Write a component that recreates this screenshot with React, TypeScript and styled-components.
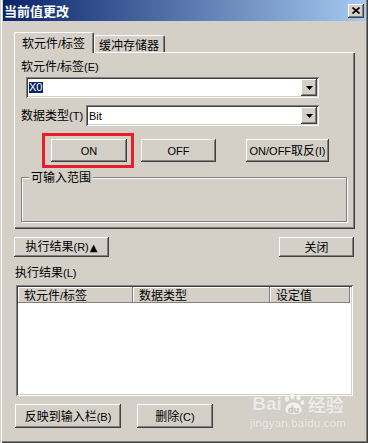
import React from "react";
import styled, { createGlobalStyle, css } from "styled-components";

const Global = createGlobalStyle`
  html, body { margin: 0; padding: 0; background: #d4d0c8; }
  body {
    font-family: "Liberation Sans", "Noto Sans CJK SC", sans-serif;
    font-size: 11px;
    line-height: 14px;
    color: #000;
  }
  * { box-sizing: border-box; }
`;

const raised = css`
  background: #d4d0c8;
  box-shadow: inset -1px -1px #404040, inset 1px 1px #ffffff,
    inset -2px -2px #808080, inset 2px 2px #d4d0c8;
`;

const sunken = css`
  box-shadow: inset 1px 1px #808080, inset -1px -1px #ffffff,
    inset 2px 2px #404040, inset -2px -2px #d4d0c8;
`;

const Cjk = styled.span`
  font-family: "Noto Sans CJK SC", sans-serif;
  font-size: 12px;
`;

const CJK_RE = /([\u2e80-\u9fff\uff00-\uffef]+)/;
function T({ s }: { s: string }) {
  return (
    <>
      {s.split(CJK_RE).map((p, i) =>
        CJK_RE.test(p) ? <Cjk key={i}>{p}</Cjk> : <React.Fragment key={i}>{p}</React.Fragment>
      )}
    </>
  );
}

const Window = styled.div`
  position: relative;
  width: 368px;
  height: 443px;
  display: flex;
  flex-direction: column;
  background: #d4d0c8;
  box-shadow: inset 1px 0 #d4d0c8, inset 2px 0 #ffffff, inset -1px -1px #404040,
    inset -2px -2px #808080;
  overflow: hidden;
`;

const TitleBar = styled.div`
  height: 21px;
  margin: 0 2px 0 3px;
  display: flex;
  align-items: center;
  justify-content: space-between;
  padding: 0 2px 0 1px;
  background: linear-gradient(to right, #0a246a, #a6caf0);
`;

const TitleText = styled.span`
  color: #fff;
  font-family: "Noto Sans CJK SC", sans-serif;
  font-weight: bold;
  font-size: 13px;
  line-height: 16px;
`;

const CloseBtn = styled.div`
  ${raised};
  width: 16px;
  height: 14px;
  display: flex;
  align-items: center;
  justify-content: center;
`;

const Content = styled.div`
  display: flex;
  flex-direction: column;
  padding: 11px 13px 0 14px;
`;

const TabStrip = styled.div`
  display: flex;
  align-items: flex-end;
  height: 20px;
`;

const Tab = styled.div<{ $active?: boolean; $w: number }>`
  position: relative;
  width: ${(p) => p.$w}px;
  height: ${(p) => (p.$active ? 21 : 17)}px;
  margin-bottom: ${(p) => (p.$active ? -1 : 0)}px;
  z-index: ${(p) => (p.$active ? 1 : 0)};
  background: #d4d0c8;
  border-top: 1px solid #fff;
  border-left: 1px solid #fff;
  border-right: 1px solid #404040;
  border-radius: 2px 2px 0 0;
  box-shadow: inset -1px 0 #808080;
  padding: ${(p) => (p.$active ? "3px 0 0 7px" : "2px 0 0 4px")};
  white-space: nowrap;
`;

const Panel = styled.div`
  height: 177px;
  display: flex;
  flex-direction: column;
  padding: 7px 0 0 7px;
  box-shadow: inset 1px 1px #ffffff, inset -1px -1px #404040, inset -2px -2px #808080;
`;

const FieldLabel = styled.div`
  height: 14px;
  white-space: nowrap;
`;

const Combo = styled.div<{ $w: number }>`
  ${sunken};
  width: ${(p) => p.$w}px;
  height: 21px;
  padding: 2px;
  display: flex;
  align-items: center;
  background: #fff;
`;

const DeviceCombo = styled(Combo)`
  margin: 4px 0 0 5px;
`;

const ComboText = styled.div`
  flex: 1;
  padding-left: 1px;
  display: flex;
  align-items: center;
`;

const Selected = styled.span`
  background: #0a246a;
  color: #fff;
  line-height: 11px;
  padding: 0 1px 0 0;
`;

const DropBtn = styled.div`
  ${raised};
  width: 16px;
  height: 17px;
  display: flex;
  align-items: center;
  justify-content: center;
`;

const TypeRow = styled.div`
  display: flex;
  align-items: center;
  margin-top: 7px;
`;

const TypeLabel = styled.div`
  width: 65px;
  white-space: nowrap;
`;

const ButtonRow = styled.div`
  display: flex;
  margin-top: 13px;
`;

const Btn = styled.div<{ $w: number; $h: number; $ml?: number }>`
  ${raised};
  position: relative;
  width: ${(p) => p.$w}px;
  height: ${(p) => p.$h}px;
  margin-left: ${(p) => p.$ml ?? 0}px;
  display: flex;
  align-items: center;
  justify-content: center;
  white-space: nowrap;
  flex-shrink: 0;
`;

const Highlight = styled.div`
  position: absolute;
  left: -9px;
  top: -6px;
  right: -7px;
  bottom: -6px;
  border: 3px solid #e61e28;
  pointer-events: none;
`;

const GroupBox = styled.div`
  position: relative;
  margin-top: 15px;
  width: 326px;
  height: 45px;
  border: 1px solid #808080;
  box-shadow: inset 1px 1px #ffffff, 1px 1px #ffffff;
`;

const Legend = styled.span`
  position: absolute;
  top: -8px;
  left: 7px;
  padding: 0 2px;
  background: #d4d0c8;
`;

const ActionRow = styled.div`
  display: flex;
  justify-content: space-between;
  margin-top: 8px;
  padding-right: 1px;
`;

const Arrow = styled.span`
  font-family: "DejaVu Sans", sans-serif;
  font-size: 10px;
  margin-left: 1px;
`;

const SectionLabel = styled.div`
  margin-top: 8px;
  padding-left: 1px;
  height: 14px;
`;

const ListView = styled.div`
  ${sunken};
  margin: 6px 0 0 2px;
  width: 337px;
  height: 111px;
  padding: 2px;
  background: #fff;
`;

const Header = styled.div`
  display: flex;
  height: 16px;
`;

const HeaderCell = styled.div<{ $w: number }>`
  width: ${(p) => p.$w}px;
  height: 16px;
  padding-left: 6px;
  background: #d4d0c8;
  box-shadow: inset -1px -1px #808080, inset 1px 1px #ffffff;
  line-height: 15px;
  overflow: hidden;
  white-space: nowrap;
`;

const BottomRow = styled.div`
  display: flex;
  margin-top: 8px;
`;

const Watermark = styled.div`
  position: absolute;
  left: 250px;
  top: 392px;
  display: flex;
  flex-direction: column;
  align-items: center;
  color: rgba(255, 255, 255, 0.7);
  text-shadow: 0 0 1px rgba(170, 170, 170, 0.45);
  pointer-events: none;
`;

const WmTop = styled.div`
  display: flex;
  align-items: center;
  font-family: "Liberation Sans", sans-serif;
  font-weight: bold;
  font-size: 19px;
  line-height: 24px;
`;

const WmCjk = styled.span`
  font-family: "Noto Sans CJK SC", sans-serif;
  font-size: 18px;
  font-weight: bold;
  margin-left: 2px;
`;

const WmSub = styled.div`
  font-family: "Liberation Sans", sans-serif;
  font-size: 11.5px;
  line-height: 14px;
  letter-spacing: 0.2px;
`;

const DownTri = () => (
  <svg width="7" height="4" viewBox="0 0 7 4">
    <path d="M0 0h7L3.5 4z" fill="#000" />
  </svg>
);

const XIcon = () => (
  <svg width="8" height="7" viewBox="0 0 8 7">
    <path d="M0.5 0.5L7.5 6.5M7.5 0.5L0.5 6.5" stroke="#000" strokeWidth="1.6" />
  </svg>
);

const Paw = () => (
  <svg width="24" height="22" viewBox="0 0 24 22">
    <g fill="rgba(255,255,255,0.7)" stroke="rgba(170,170,170,0.45)" strokeWidth="0.6">
      <ellipse cx="5" cy="6" rx="2.6" ry="3.2" />
      <ellipse cx="10.5" cy="3.5" rx="2.6" ry="3.2" />
      <ellipse cx="16.5" cy="4.5" rx="2.6" ry="3.2" />
      <ellipse cx="20.5" cy="9.5" rx="2.3" ry="2.8" />
      <path d="M3 17c0-5 4.5-8 8.5-8s8.5 3 8.5 8c0 3-3.5 4.5-8.5 4.5S3 20 3 17z" />
    </g>
    <text
      x="11.5"
      y="19.5"
      textAnchor="middle"
      fontFamily="Liberation Sans, sans-serif"
      fontWeight="bold"
      fontSize="9"
      fill="rgba(190,186,178,0.9)"
      stroke="none"
    >
      du
    </text>
  </svg>
);

export default function App() {
  return (
    <>
      <Global />
      <Window>
        <TitleBar>
          <TitleText>当前值更改</TitleText>
          <CloseBtn>
            <XIcon />
          </CloseBtn>
        </TitleBar>
        <Content>
          <TabStrip>
            <Tab $active $w={80}>
              <T s="软元件/标签" />
            </Tab>
            <Tab $w={71}>
              <T s="缓冲存储器" />
            </Tab>
          </TabStrip>
          <Panel>
            <FieldLabel>
              <T s="软元件/标签(E)" />
            </FieldLabel>
            <DeviceCombo $w={293}>
              <ComboText>
                <Selected>X0</Selected>
              </ComboText>
              <DropBtn>
                <DownTri />
              </DropBtn>
            </DeviceCombo>
            <TypeRow>
              <TypeLabel>
                <T s="数据类型(T)" />
              </TypeLabel>
              <Combo $w={233}>
                <ComboText>Bit</ComboText>
                <DropBtn>
                  <DownTri />
                </DropBtn>
              </Combo>
            </TypeRow>
            <ButtonRow>
              <Btn $w={76} $h={23} $ml={30}>
                ON
                <Highlight />
              </Btn>
              <Btn $w={75} $h={23} $ml={14}>
                OFF
              </Btn>
              <Btn $w={83} $h={23} $ml={30}>
                <span>
                  <T s="ON/OFF取反(I)" />
                </span>
              </Btn>
            </ButtonRow>
            <GroupBox>
              <Legend>
                <T s="可输入范围" />
              </Legend>
            </GroupBox>
          </Panel>
          <ActionRow>
            <Btn $w={95} $h={20}>
              <span>
                <T s="执行结果(R)" />
                <Arrow>▲</Arrow>
              </span>
            </Btn>
            <Btn $w={75} $h={20}>
              <T s="关闭" />
            </Btn>
          </ActionRow>
          <SectionLabel>
            <T s="执行结果(L)" />
          </SectionLabel>
          <ListView>
            <Header>
              <HeaderCell $w={115}>
                <T s="软元件/标签" />
              </HeaderCell>
              <HeaderCell $w={137}>
                <T s="数据类型" />
              </HeaderCell>
              <HeaderCell $w={80}>
                <T s="设定值" />
              </HeaderCell>
            </Header>
          </ListView>
          <BottomRow>
            <Btn $w={106} $h={24} $ml={1}>
              <span>
                <T s="反映到输入栏(B)" />
              </span>
            </Btn>
            <Btn $w={76} $h={24} $ml={16}>
              <span>
                <T s="删除(C)" />
              </span>
            </Btn>
          </BottomRow>
        </Content>
        <Watermark>
          <WmTop>
            Bai
            <Paw />
            <WmCjk>经验</WmCjk>
          </WmTop>
          <WmSub>jingyan.baidu.com</WmSub>
        </Watermark>
      </Window>
    </>
  );
}
